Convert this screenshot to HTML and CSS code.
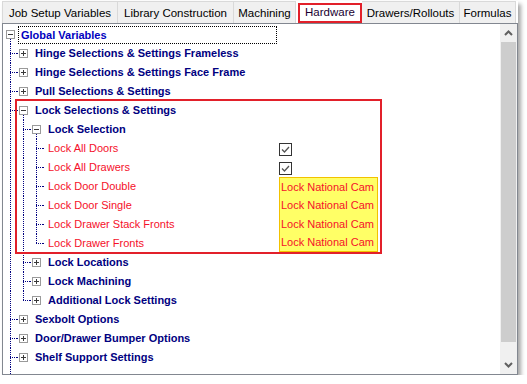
FILE: index.html
```html
<!DOCTYPE html>
<html>
<head>
<meta charset="utf-8">
<link rel="stylesheet" href="styles.css">
</head>
<body>
<div class="window">
  <div class="tabs">
    <div class="tab w1">Job Setup Variables</div>
    <div class="tab w2">Library Construction</div>
    <div class="tab w3">Machining</div>
    <div class="tab w4 selected">Hardware</div>
    <div class="tab w5">Drawers/Rollouts</div>
    <div class="tab w6">Formulas</div>
  </div>
  <div class="panel">
    <div class="tree">
      <div class="row"><div class="main"><div class="g e root open"><span class="box minus"></span></div><span class="label focus sel">Global Variables</span></div></div>
      <div class="row"><div class="main"><div class="g t"></div><div class="g e"><span class="box plus"></span></div><span class="label">Hinge Selections &amp; Settings Frameless</span></div></div>
      <div class="row"><div class="main"><div class="g t"></div><div class="g e"><span class="box plus"></span></div><span class="label">Hinge Selections &amp; Settings Face Frame</span></div></div>
      <div class="row"><div class="main"><div class="g t"></div><div class="g e"><span class="box plus"></span></div><span class="label">Pull Selections &amp; Settings</span></div></div>
      <div class="row"><div class="main"><div class="g t"></div><div class="g e open"><span class="box minus"></span></div><span class="label">Lock Selections &amp; Settings</span></div></div>
      <div class="row"><div class="main"><div class="g v"></div><div class="g t"></div><div class="g e open"><span class="box minus"></span></div><span class="label">Lock Selection</span></div></div>
      <div class="row"><div class="main"><div class="g v"></div><div class="g v"></div><div class="g t"></div><span class="label leaf">Lock All Doors</span></div><div class="val"><span class="check"><svg width="11" height="11" viewBox="0 0 11 11"><polyline points="2,5.5 4.5,8 9,3" fill="none" stroke="#555" stroke-width="1.3"/></svg></span></div></div>
      <div class="row"><div class="main"><div class="g v"></div><div class="g v"></div><div class="g t"></div><span class="label leaf">Lock All Drawers</span></div><div class="val"><span class="check"><svg width="11" height="11" viewBox="0 0 11 11"><polyline points="2,5.5 4.5,8 9,3" fill="none" stroke="#555" stroke-width="1.3"/></svg></span></div></div>
      <div class="row"><div class="main"><div class="g v"></div><div class="g v"></div><div class="g t"></div><span class="label leaf">Lock Door Double</span></div><div class="val yellow first">Lock National Cam</div></div>
      <div class="row"><div class="main"><div class="g v"></div><div class="g v"></div><div class="g t"></div><span class="label leaf">Lock Door Single</span></div><div class="val yellow">Lock National Cam</div></div>
      <div class="row"><div class="main"><div class="g v"></div><div class="g v"></div><div class="g t"></div><span class="label leaf">Lock Drawer Stack Fronts</span></div><div class="val yellow">Lock National Cam</div></div>
      <div class="row"><div class="main"><div class="g v"></div><div class="g v"></div><div class="g l"></div><span class="label leaf">Lock Drawer Fronts</span></div><div class="val yellow last">Lock National Cam</div></div>
      <div class="row"><div class="main"><div class="g v"></div><div class="g t"></div><div class="g e"><span class="box plus"></span></div><span class="label">Lock Locations</span></div></div>
      <div class="row"><div class="main"><div class="g v"></div><div class="g t"></div><div class="g e"><span class="box plus"></span></div><span class="label">Lock Machining</span></div></div>
      <div class="row"><div class="main"><div class="g v"></div><div class="g l"></div><div class="g e"><span class="box plus"></span></div><span class="label">Additional Lock Settings</span></div></div>
      <div class="row"><div class="main"><div class="g t"></div><div class="g e"><span class="box plus"></span></div><span class="label">Sexbolt Options</span></div></div>
      <div class="row"><div class="main"><div class="g t"></div><div class="g e"><span class="box plus"></span></div><span class="label">Door/Drawer Bumper Options</span></div></div>
      <div class="row"><div class="main"><div class="g t"></div><div class="g e"><span class="box plus"></span></div><span class="label">Shelf Support Settings</span></div></div>
      <div class="filler"><div class="g v fill"></div></div>
      <div class="highlight"></div>
    </div>
    <div class="scrollbar">
      <div class="sb-btn"><svg width="9" height="6" viewBox="0 0 9 6"><polyline points="1,5 4.5,1.5 8,5" fill="none" stroke="#606060" stroke-width="2"/></svg></div>
      <div class="sb-thumb"></div>
      <div class="sb-track"></div>
      <div class="sb-btn"><svg width="9" height="6" viewBox="0 0 9 6"><polyline points="1,1 4.5,4.5 8,1" fill="none" stroke="#606060" stroke-width="2"/></svg></div>
    </div>
  </div>
</div>
</body>
</html>
```

FILE: styles.css
```css
html, body {
  margin: 0;
  padding: 0;
  background: #ffffff;
}
body {
  font-family: "Liberation Sans", Arial, sans-serif;
  font-size: 11px;
}
.window {
  margin: 1px 0 0 2px;
  width: 516px;
  box-shadow: 3px 3px 4px rgba(0, 0, 0, 0.35);
}
.tabs {
  display: flex;
  height: 22px;
  background: #fff;
}
.tab {
  box-sizing: border-box;
  height: 22px;
  border: 1px solid #d9d9d9;
  border-bottom: none;
  border-left: none;
  background: #f0f0f0;
  font-size: 11.5px;
  color: #000;
  line-height: 22px;
  text-align: center;
}
.tab.w1 { width: 116px; border-left: 1px solid #d9d9d9; }
.tab.w2 { width: 116px; }
.tab.w3 { width: 62px; }
.tab.w4 { width: 66px; }
.tab.w5 { width: 98px; }
.tab.w6 { width: 56px; }
.tab.selected {
  background: #ffffff;
  color: #1a0030;
  outline: 2px solid #e2202a;
  outline-offset: -2px;
  border: none;
  position: relative;
  z-index: 1;
  margin: 2px 0 0 2px;
  height: 20px;
  line-height: 18px;
  width: 64px;
}
.panel {
  display: flex;
  height: 352px;
  box-sizing: border-box;
  border: 1px solid #828790;
  background: #fff;
}
.tree {
  position: relative;
  flex: 1;
  padding: 1px 0 0 1px;
  display: flex;
  flex-direction: column;
}
.row {
  display: grid;
  grid-template-columns: 275px 100px;
  height: 19px;
}
.main {
  display: flex;
  height: 19px;
}
.g {
  flex: none;
  width: 13px;
  height: 19px;
}
.v {
  background: repeating-linear-gradient(to bottom, #000080 0 1px, transparent 1px 2px) 6px 0 / 1px 100% no-repeat;
}
.t {
  background:
    repeating-linear-gradient(to bottom, #000080 0 1px, transparent 1px 2px) 6px 0 / 1px 100% no-repeat,
    repeating-linear-gradient(to right, #000080 0 1px, transparent 1px 2px) 6px 9px / 7px 1px no-repeat;
}
.l {
  background:
    repeating-linear-gradient(to bottom, #000080 0 1px, transparent 1px 2px) 6px 0 / 1px 10px no-repeat,
    repeating-linear-gradient(to right, #000080 0 1px, transparent 1px 2px) 6px 9px / 7px 1px no-repeat;
}
.e {
  background: repeating-linear-gradient(to right, #000080 0 1px, transparent 1px 2px) 0 9px / 2px 1px no-repeat;
}
.e.open {
  background:
    repeating-linear-gradient(to right, #000080 0 1px, transparent 1px 2px) 0 9px / 2px 1px no-repeat,
    repeating-linear-gradient(to bottom, #000080 0 1px, transparent 1px 2px) 6px 14px / 1px 5px no-repeat;
}
.e.root.open {
  background: repeating-linear-gradient(to bottom, #000080 0 1px, transparent 1px 2px) 6px 14px / 1px 5px no-repeat;
}
.box {
  display: block;
  box-sizing: border-box;
  width: 9px;
  height: 9px;
  margin: 5px 0 0 2px;
  border: 1px solid #9a9a9a;
  background-color: #fff;
}
.box.minus {
  background: linear-gradient(#3a3a3a, #3a3a3a) center / 5px 1px no-repeat, #fff;
}
.box.plus {
  background:
    linear-gradient(#3a3a3a, #3a3a3a) center / 5px 1px no-repeat,
    linear-gradient(#3a3a3a, #3a3a3a) center / 1px 5px no-repeat,
    #fff;
}
.label {
  font-weight: bold;
  color: #000080;
  line-height: 19px;
  padding-left: 5px;
  white-space: nowrap;
}
.label.leaf {
  font-weight: normal;
  color: #f5102a;
  background: repeating-linear-gradient(to right, #000080 0 1px, transparent 1px 2px) 0 9px / 2px 1px no-repeat;
}
.label.focus {
  box-sizing: border-box;
  width: 259px;
  height: 18px;
  line-height: 16px;
  margin: 1px 0 0 1px;
  padding-left: 2px;
  border: 1px dotted #000;
}
.label.sel {
  color: #0000c0;
}
.val {
  height: 19px;
  line-height: 19px;
  color: #f5102a;
  white-space: nowrap;
}
.check {
  display: flex;
  align-items: center;
  justify-content: center;
  box-sizing: border-box;
  width: 13px;
  height: 13px;
  margin-top: 4px;
  border: 1px solid #333;
  background: #fff;
}
.yellow {
  box-sizing: border-box;
  background: #ffff66;
  border-left: 1px solid #f2c200;
  border-right: 1px solid #f2c200;
  padding-left: 1px;
  width: 99px;
}
.yellow.first {
  border-top: 1px solid #f2c200;
  line-height: 18px;
}
.yellow.last {
  border-bottom: 1px solid #f2c200;
  line-height: 17px;
  height: 18px;
}
.filler {
  flex: 1;
  display: flex;
}
.g.fill {
  height: auto;
}
.highlight {
  position: absolute;
  left: 12px;
  top: 75px;
  width: 367px;
  height: 155px;
  box-sizing: border-box;
  border: 2px solid #e2202a;
}
.scrollbar {
  flex: none;
  width: 17px;
  display: flex;
  flex-direction: column;
  background: #f0f0f0;
}
.sb-btn {
  height: 18px;
  display: flex;
  align-items: center;
  justify-content: center;
}
.sb-thumb {
  height: 300px;
  margin: 0 1px;
  background: #cdcdcd;
}
.sb-track {
  flex: 1;
}
```
